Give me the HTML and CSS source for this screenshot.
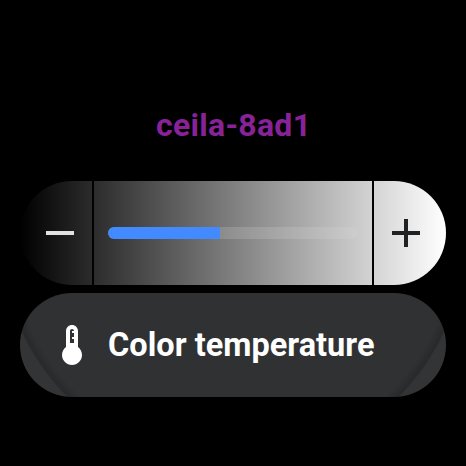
FILE: index.html
```
<!DOCTYPE html>
<html lang="en">
<head>
<meta charset="utf-8">
<title>Color temperature</title>
<link rel="stylesheet" href="styles.css">
</head>
<body>
<main class="screen">
  <h1 class="device-name"><svg class="fit" width="155" height="40"><text x="0" y="30" textLength="155" lengthAdjust="spacing">ceila-8ad1</text></svg></h1>
  <section class="slider">
    <button class="step" aria-label="Decrease"><svg width="28" height="28"><path d="M0 14H28" stroke="#e2e2e2" stroke-width="4"/></svg></button>
    <div class="middle"><div class="track"><div class="fill"></div></div></div>
    <button class="step" aria-label="Increase"><svg width="28" height="28"><path d="M0 14H28M14 0V28" stroke="#202124" stroke-width="4"/></svg></button>
  </section>
  <section class="chip">
    <svg class="thermo" width="20" height="40" viewBox="7 2 10 20">
      <path fill="#fff" d="M15 13V5c0-1.66-1.34-3-3-3S9 3.34 9 5v8c-1.21.91-2 2.37-2 4 0 2.76 2.24 5 5 5s5-2.24 5-5c0-1.63-.79-3.09-2-4zm-4-8c0-.55.45-1 1-1s1 .45 1 1h-1v1h1v2h-1v1h1v2h-2V5z"/>
    </svg>
    <svg class="fit" width="270" height="44"><text x="0" y="33" textLength="266.500" lengthAdjust="spacing">Color temperature</text></svg>
  </section>
</main>
</body>
</html>
```
FILE: styles.css
```
* { box-sizing: border-box; }
body { margin: 0; background: #000; font-family: Roboto, sans-serif; }
.screen { width: 466px; height: 466px; padding: 106px 20px 0; overflow: hidden; }
.device-name { margin: 0; height: 75px; display: flex; justify-content: center; }
.fit { display: block; overflow: visible; font-size: 32.5px; font-weight: 700; fill: #fff; }
.device-name .fit { font-size: 32px; fill: #882299; font-weight: 700; }
.slider {
  display: flex;
  height: 104px;
  border-radius: 52px;
  overflow: hidden;
  background: linear-gradient(90deg, #000, #fff);
}
.step {
  width: 72px;
  padding: 0;
  border: 0;
  background: none;
  display: flex;
  align-items: center;
  justify-content: center;
}
.step svg { display: block; }
.step:first-child { padding-left: 8px; }
.step:last-child { padding-right: 8px; }
.middle {
  width: 282px;
  padding: 0 14px;
  border: solid #000;
  border-width: 0 2px;
  display: flex;
  align-items: center;
}
.track {
  width: 100%;
  height: 12px;
  border-radius: 6px;
  overflow: hidden;
  background: rgba(222, 222, 222, 0.2);
}
.fill { width: 112px; height: 12px; background: #448aff; }
.chip {
  display: flex;
  height: 104px;
  margin-top: 8px;
  padding-left: 42px;
  border-radius: 52px;
  align-items: center;
  background: radial-gradient(circle 250px at 213px -60px, #303133 223px, #28292a 232px, #333436 234px);
}
.thermo { margin-right: 26px; }
```
